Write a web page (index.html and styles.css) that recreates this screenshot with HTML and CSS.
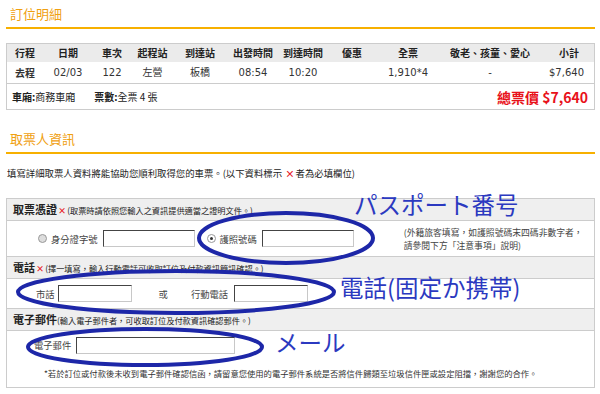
FILE: index.html
```html
<!DOCTYPE html>
<html lang="zh-Hant">
<head>
<meta charset="UTF-8">
<title>訂位明細</title>
<link rel="stylesheet" href="styles.css">
</head>
<body>
<div class="page">
  <h2 class="sec-title">訂位明細</h2>

  <div class="order-box">
    <table class="order">
      <colgroup>
        <col style="width:36px"><col style="width:50px"><col style="width:38px"><col style="width:43px">
        <col style="width:52px"><col style="width:54px"><col style="width:46px"><col style="width:52px">
        <col style="width:60px"><col style="width:104px"><col>
      </colgroup>
      <tr>
        <th>行程</th><th>日期</th><th>車次</th><th>起程站</th><th>到達站</th>
        <th>出發時間</th><th>到達時間</th><th>優惠</th><th>全票</th>
        <th>敬老、孩童、愛心</th><th class="r">小計</th>
      </tr>
      <tr>
        <td class="b">去程</td><td>02/03</td><td>122</td><td>左營</td><td>板橋</td>
        <td>08:54</td><td>10:20</td><td></td><td>1,910*4</td><td>-</td><td class="r">$7,640</td>
      </tr>
    </table>
    <div class="summary">
      <span><b>車廂:</b>商務車廂</span>
      <span class="count"><b>票數:</b>全票 4 張</span>
      <span class="total">總票價 $7,640</span>
    </div>
  </div>

  <h2 class="sec-title second">取票人資訊</h2>
  <p class="intro">填寫詳細取票人資料將能協助您順利取得您的車票。(以下資料標示 <span class="req">×</span>者為必填欄位)</p>

  <div class="form-box">
    <div class="fhead"><b>取票憑證</b><span class="req">×</span>(取票時請依照您輸入之資訊提供適當之證明文件。)</div>
    <div class="frow id-row">
      <label class="opt"><span class="radio"></span>身分證字號</label>
      <span class="inp w92"></span>
      <label class="opt second-opt"><span class="radio on"></span>護照號碼</label>
      <span class="inp w92"></span>
      <span class="hint">(外籍旅客填寫，如護照號碼末四碼非數字者，請參閱下方「注意事項」說明)</span>
    </div>

    <div class="fhead"><b>電話</b><span class="req">×</span>(擇一填寫，輸入行動電話可收取訂位及付款資訊簡訊確認。)</div>
    <div class="frow phone-row">
      <span>市話</span>
      <span class="inp w73"></span>
      <span class="or">或</span>
      <span>行動電話</span>
      <span class="inp w73 mobile"></span>
    </div>

    <div class="fhead"><b>電子郵件</b>(輸入電子郵件者，可收取訂位及付款資訊確認郵件。)</div>
    <div class="frow mail-row">
      <span>電子郵件</span>
      <span class="inp w158"></span>
    </div>
    <p class="note">*若於訂位或付款後未收到電子郵件確認信函，請留意您使用的電子郵件系統是否將信件歸類至垃圾信件匣或設定阻擋，謝謝您的合作。</p>
  </div>
</div>

<svg class="marks" width="600" height="394" viewBox="0 0 600 394">
  <ellipse cx="286" cy="238" rx="87" ry="25" />
  <ellipse cx="176" cy="292" rx="158" ry="21" />
  <ellipse cx="145" cy="347" rx="117" ry="18" />
</svg>
<span class="anno a1">パスポート番号</span>
<span class="anno a2">電話(固定か携帯)</span>
<span class="anno a3">メール</span>
</body>
</html>
```

FILE: styles.css
```css
body {
    margin: 0;
    background: #fff;
    color: #222;
    font-family: "DejaVu Sans", "Noto Sans CJK TC", sans-serif;
    font-size: 10px;
    line-height: 14px;
}

.page {
    position: relative;
    padding: 0 5px 0 6px;
}

.sec-title {
    margin: 0;
    padding: 6px 0 6px 4px;
    font-family: "Noto Sans CJK TC", sans-serif;
    font-size: 13px;
    font-weight: normal;
    color: #f0a010;
    border-bottom: 2px solid #f7b000;
    line-height: 15px;
}

.sec-title.second {
    margin-top: 15px;
}

/* order table */
.order-box {
    margin-top: 14px;
    border: 1px solid #ccc;
}

.order {
    width: 100%;
    table-layout: fixed;
    border-collapse: collapse;
    font-size: 10px;
    line-height: 14px;
}

.order th {
    background: #ebebeb;
    font-family: "Noto Sans CJK TC", sans-serif;
    font-weight: bold;
    font-size: 10px;
    height: 18px;
    padding: 0;
    text-align: center;
    white-space: nowrap;
}

.order td {
    height: 21px;
    padding: 0;
    text-align: center;
    color: #333;
    border-bottom: 1px solid #ccc;
    white-space: nowrap;
}

.order td.b {
    font-family: "Noto Sans CJK TC", sans-serif;
    font-weight: bold;
}

.order td.r { text-align: right; padding-right: 10px; }
.order th.r { text-align: right; padding-right: 15px; }

.summary {
    display: flex;
    align-items: center;
    height: 25px;
    padding: 0 6px 0 5px;
    font-family: "Noto Sans CJK TC", sans-serif;
    font-size: 10px;
}

.summary .count { margin-left: 19px; }

.summary .total {
    margin-left: auto;
    color: #e8111a;
    font-weight: bold;
    font-size: 14px;
}

.intro {
    margin: 12px 0 0 1px;
    font-family: "Noto Sans CJK TC", sans-serif;
    font-size: 9.4px;
    line-height: 14px;
}

.req {
    color: #e8111a;
    font-weight: bold;
    margin: 0 1px;
}

/* pickup form */
.form-box {
    margin-top: 18px;
    border: 1px solid #ccc;
    font-family: "Noto Sans CJK TC", sans-serif;
    font-size: 8.2px;
}

.fhead {
    background: #efefef;
    height: 21px;
    line-height: 21px;
    padding-left: 6px;
    border-bottom: 1px solid #ccc;
    white-space: nowrap;
}

.fhead b { font-size: 11px; }

.frow {
    display: flex;
    align-items: center;
    border-bottom: 1px solid #ccc;
    color: #444;
    font-size: 9.3px;
    white-space: nowrap;
}

.frow > * { flex-shrink: 0; }

.id-row { height: 35px; padding-left: 31px; }
.phone-row { height: 29px; padding-left: 29px; }
.mail-row { height: 28px; padding-left: 27px; border-bottom: 0; }

.opt {
    display: flex;
    align-items: center;
}

.opt + .inp { margin-left: 5px; }
.second-opt { margin-left: 12px; }

.radio {
    width: 7px;
    height: 7px;
    border-radius: 50%;
    border: 1px solid #999;
    background: #ddd;
    margin-right: 4px;
    position: relative;
}

.radio.on { background: #fff; }

.radio.on::after {
    content: "";
    position: absolute;
    left: 2px;
    top: 2px;
    width: 3px;
    height: 3px;
    border-radius: 50%;
    background: #333;
}

.inp {
    display: inline-block;
    height: 15px;
    border: 1px solid #c8c8c8;
    border-top-color: #444;
    border-left-color: #444;
    background: #fff;
}

.w92 { width: 90px; }
.w73 { width: 72px; }
.w158 { width: 157px; }

.phone-row .inp { margin-left: 3px; }
.phone-row .inp.mobile { margin-left: 6px; }
.phone-row .or { margin: 0 23px 0 27px; }
.mail-row .inp { margin-left: 5px; }

.hint {
    margin-left: 50px;
    font-size: 8.8px;
    line-height: 13px;
    white-space: normal;
    width: 180px;
}

.note {
    margin: 8px 0 8px 37px;
    font-size: 8.3px;
    line-height: 12px;
    color: #333;
    white-space: nowrap;
}

/* hand-drawn annotations */
.marks {
    position: absolute;
    left: 0;
    top: 0;
    pointer-events: none;
}

.marks ellipse {
    fill: none;
    stroke: #1d27a8;
    stroke-width: 4;
}

.anno {
    position: absolute;
    font-family: "Noto Sans CJK JP", sans-serif;
    color: #2b39c0;
    font-size: 23.5px;
    line-height: 26px;
}

.a1 { left: 354px; top: 191px; }
.a2 { left: 340px; top: 274px; }
.a3 { left: 275px; top: 329px; }
```
